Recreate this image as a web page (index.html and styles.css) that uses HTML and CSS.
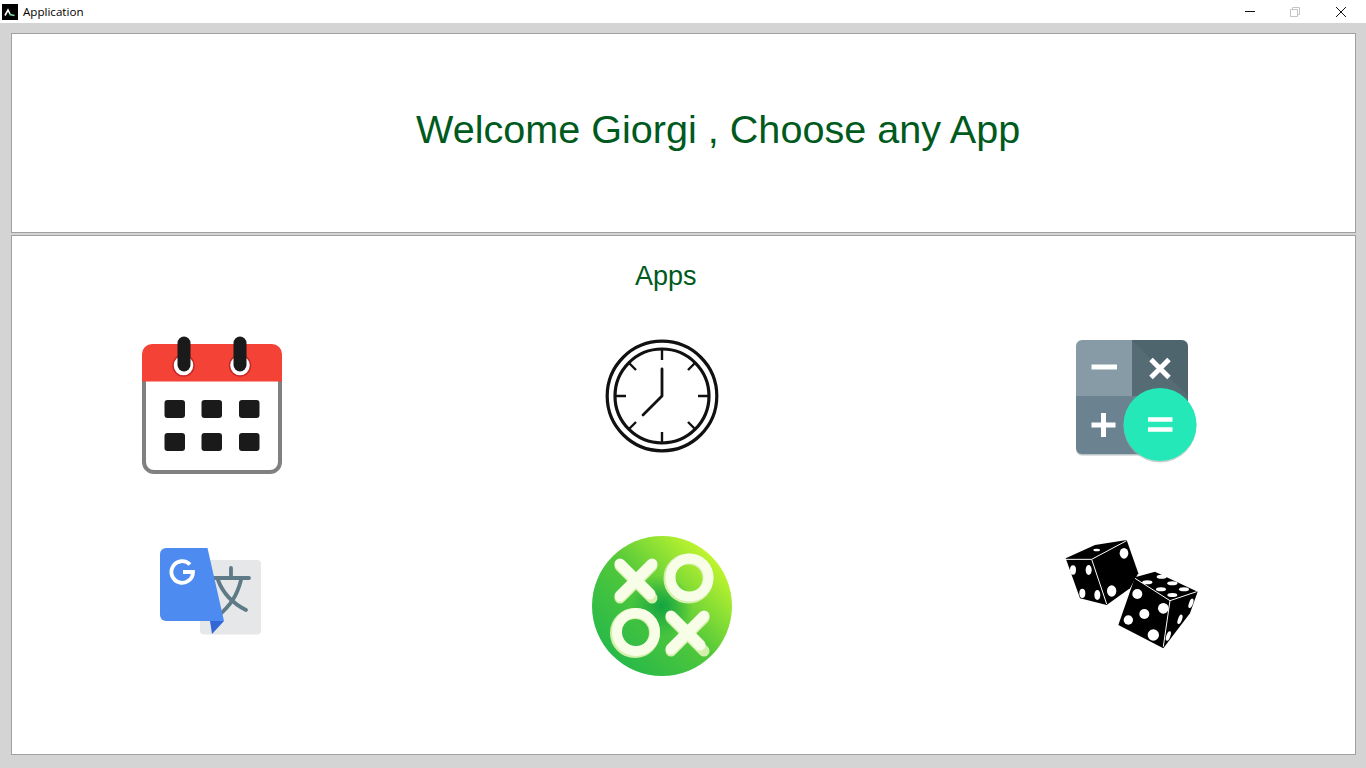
FILE: index.html
```html
<!DOCTYPE html>
<html lang="en">
<head>
<meta charset="utf-8">
<title>Application</title>
<link rel="stylesheet" href="styles.css">
</head>
<body>
<header class="titlebar">
  <div class="title">
    <svg class="app-icon" viewBox="0 0 16 16"><rect width="16" height="16" fill="#000"/><path d="M3 11.500 L6 6 L8 10" fill="none" stroke="#fff" stroke-width="1.600"/><path d="M7.500 10.500 L12.500 11.500" stroke="#7fe0b0" stroke-width="1.600"/></svg>
    <span class="title-text">Application</span>
  </div>
  <div class="win-buttons">
    <div class="win-btn"><svg viewBox="0 0 10 10"><path d="M0 4.500H10" stroke="#111" stroke-width="1"/></svg></div>
    <div class="win-btn"><svg viewBox="0 0 10 10"><path d="M.5 2.500h7v7h-7zM2.500 2.500v-2h7v7h-2" fill="none" stroke="#c4c4c4" stroke-width="1"/></svg></div>
    <div class="win-btn"><svg viewBox="0 0 10 10"><path d="M0 0L10 10M10 0L0 10" stroke="#111" stroke-width="1"/></svg></div>
  </div>
</header>
<main class="content">
  <section class="panel welcome"><h1 class="welcome-text">Welcome Giorgi , Choose any App</h1></section>
  <section class="panel apps">
    <h2 class="apps-title">Apps</h2>
    <div class="app-grid">
      <!-- Calendar -->
      <svg class="icon" viewBox="0 0 140 140">
        <path d="M2 42V126a10 10 0 0 0 10 10H128a10 10 0 0 0 10-10V42" fill="#fff" stroke="#808080" stroke-width="4"/>
        <path d="M0 45.500V18a10 10 0 0 1 10-10H130a10 10 0 0 1 10 10V45.500Z" fill="#f44336"/>
        <circle cx="41.500" cy="29.500" r="10.500" fill="#fff" stroke="#c62828" stroke-width="1.500"/>
        <circle cx="98" cy="29.500" r="10.500" fill="#fff" stroke="#c62828" stroke-width="1.500"/>
        <rect x="35.500" y="0.500" width="13" height="35" rx="6.500" fill="#1a1a1a"/>
        <rect x="91.500" y="0.500" width="13" height="35" rx="6.500" fill="#1a1a1a"/>
        <g fill="#1a1a1a">
          <rect x="22.500" y="64" width="20.500" height="18" rx="3"/><rect x="59.500" y="64" width="20.500" height="18" rx="3"/><rect x="97" y="64" width="20.500" height="18" rx="3"/>
          <rect x="22.500" y="97" width="20.500" height="18" rx="3"/><rect x="59.500" y="97" width="20.500" height="18" rx="3"/><rect x="97" y="97" width="20.500" height="18" rx="3"/>
        </g>
      </svg>
      <!-- Clock -->
      <svg class="icon" viewBox="0 0 140 140">
        <g fill="none" stroke="#111">
          <circle cx="70" cy="60" r="54.800" stroke-width="3.200"/>
          <circle cx="70" cy="60" r="47" stroke-width="3.200"/>
          <path d="M70 13V24M70 96V107M23 60H34M106 60H117M36.500 26.500L44 34M103.500 26.500L96 34M36.500 93.500L44 86M103.500 93.500L96 86" stroke-width="2.400"/>
          <path d="M70 33V60L51 79" stroke-width="2.800" stroke-linecap="round" stroke-linejoin="round"/>
        </g>
      </svg>
      <!-- Calculator -->
      <svg class="icon" viewBox="0 0 140 140">
        <path d="M14 60H78V119.500H20a6 6 0 0 1-6-6Z" fill="#b9c3c8"/>
        <path d="M14 60V10a6 6 0 0 1 6-6H70V60Z" fill="#869ba5"/>
        <path d="M70 4H120a6 6 0 0 1 6 6V66H70Z" fill="#4f656e"/>
        <path d="M70 4L126 60V66H70Z" fill="#566c75"/>
        <path d="M14 60H78V118H20a6 6 0 0 1-6-6Z" fill="#6b8390"/>
        <circle cx="98" cy="90" r="36.500" fill="#9fb5ad" opacity=".6"/>
        <circle cx="98" cy="88.500" r="36.500" fill="#24e8b7"/>
        <g stroke="#fff" stroke-width="5" fill="none">
          <path d="M29.500 31H55"/>
          <path d="M89 23.500L107 41.500M107 23.500L89 41.500"/>
          <path d="M29.500 89H53.500M41.500 77V101"/>
          <path d="M86 83.500H110.500M86 93.500H110.500" stroke-width="4.500"/>
        </g>
      </svg>
      <!-- Translate -->
      <svg class="icon" viewBox="0 0 140 140">
        <rect x="58" y="24" width="61" height="74.500" rx="4" fill="#e6e7e9"/>
        <g fill="none" stroke="#5f7a87" stroke-width="3.800" stroke-linecap="round">
          <path d="M89 32V42M72 42H107"/>
          <path d="M76 44C82 60 92 68 104 74"/>
          <path d="M99 44C95 60 88 70 76 80"/>
        </g>
        <path d="M70 98L68 85H82Z" fill="#3367d6"/>
        <path d="M24 12H65.500L82 85H24a6 6 0 0 1-6-6V18a6 6 0 0 1 6-6Z" fill="#4d8bf0"/>
        <path d="M48 28.500A10.800 10.800 0 1 0 51 36H41" fill="none" stroke="#fff" stroke-width="3.800"/>
      </svg>
      <!-- Tic tac toe -->
      <svg class="icon" viewBox="0 0 140 140">
        <defs>
          <linearGradient id="ttt-a" x1=".12" y1=".88" x2=".88" y2=".12"><stop offset="0" stop-color="#25b84a"/><stop offset=".5" stop-color="#52c83a"/><stop offset="1" stop-color="#c8f82e"/></linearGradient>
          <radialGradient id="ttt-b" cx=".5" cy=".5" r=".22"><stop offset="0" stop-color="#12a441"/><stop offset="1" stop-color="#12a441" stop-opacity="0"/></radialGradient>
        </defs>
        <circle cx="70" cy="70" r="70" fill="url(#ttt-a)"/>
        <circle cx="70" cy="70" r="70" fill="url(#ttt-b)"/>
        <g fill="none" stroke-linecap="round">
          <g stroke="#d5efac">
            <path d="M28 30L60 62M60 30L28 62" stroke-width="11"/>
            <circle cx="96.500" cy="42.500" r="19.500" stroke-width="11"/>
            <circle cx="43" cy="97" r="19.500" stroke-width="11"/>
            <path d="M79 82L112 115M112 82L79 115" stroke-width="11"/>
          </g>
          <g stroke="#f7fde6">
            <path d="M28 28L58 58M60 28L28 60" stroke-width="11"/>
            <circle cx="97.500" cy="41.500" r="19" stroke-width="10"/>
            <circle cx="44" cy="96" r="19" stroke-width="10"/>
            <path d="M79 80L108 109M112 80L79 113" stroke-width="11"/>
          </g>
        </g>
      </svg>
      <!-- Dice -->
      <svg class="icon" viewBox="0 0 140 140">
        <g transform="translate(-7 -6) scale(.3333)">
          <path d="M32 85L120 45L215 30L250 130L225 175L155 225L75 205Z" fill="#000"/>
          <path d="M33 88L110 88L215 32M110 88L155 222" fill="none" stroke="#fff" stroke-width="3"/>
          <g fill="#fff">
            <ellipse cx="54" cy="120" rx="9" ry="14"/><ellipse cx="101" cy="120" rx="9" ry="15"/><ellipse cx="82" cy="190" rx="9" ry="14"/><ellipse cx="127" cy="195" rx="9" ry="15"/>
            <ellipse cx="207" cy="70" rx="13" ry="16"/><ellipse cx="170" cy="183" rx="14" ry="17"/><ellipse cx="125" cy="60" rx="10" ry="4"/>
          </g>
          <path d="M240 142L300 125L428 185L405 250L325 355L190 285Z" fill="#000"/>
          <path d="M240 145L345 212L425 185M345 212L325 350" fill="none" stroke="#fff" stroke-width="3"/>
          <g fill="#fff">
            <ellipse cx="320" cy="140" rx="15" ry="6"/><ellipse cx="352" cy="160" rx="15" ry="6"/><ellipse cx="387" cy="178" rx="15" ry="6"/>
            <ellipse cx="277" cy="157" rx="15" ry="6"/><ellipse cx="318" cy="178" rx="15" ry="6"/><ellipse cx="352" cy="195" rx="15" ry="6"/>
            <circle cx="247" cy="192" r="15"/><circle cx="325" cy="235" r="16"/><circle cx="268" cy="252" r="15"/><circle cx="220" cy="270" r="14"/><circle cx="295" cy="315" r="17"/>
            <ellipse cx="375" cy="268" rx="6" ry="15" transform="rotate(20 375 268)"/><ellipse cx="408" cy="220" rx="6" ry="15" transform="rotate(20 408 220)"/><ellipse cx="340" cy="318" rx="6" ry="15" transform="rotate(20 340 318)"/>
          </g>
        </g>
      </svg>
    </div>
  </section>
</main>
</body>
</html>
```
FILE: styles.css
```css
* { box-sizing: border-box; }
html, body { margin: 0; height: 100%; }
body {
  width: 1366px;
  height: 768px;
  overflow: hidden;
  background: #d4d4d4;
  font-family: "Liberation Sans", Arial, sans-serif;
  display: flex;
  flex-direction: column;
}
.titlebar {
  height: 23px;
  background: #fff;
  display: flex;
  align-items: center;
  justify-content: space-between;
  flex: none;
}
.title { display: flex; align-items: center; padding-left: 2px; }
.app-icon { width: 16px; height: 16px; display: block; }
.title-text {
  margin-left: 5px;
  font-family: "Open Sans", sans-serif;
  font-size: 11.600px;
  color: #000;
}
.win-buttons { display: flex; padding-right: 2.500px; }
.win-btn {
  width: 45.500px;
  height: 23px;
  display: flex;
  align-items: center;
  justify-content: center;
}
.win-btn svg { width: 10px; height: 10px; display: block; }
.content {
  flex: 1;
  padding: 10px 10px 13px 11px;
  display: flex;
  flex-direction: column;
  gap: 2px;
}
.panel { background: #fff; border: 1px solid #a0a0a0; }
.welcome {
  height: 200px;
  flex: none;
  display: flex;
  align-items: center;
  padding: 0 0 8px 404px;
}
.welcome-text {
  margin: 0;
  font-size: 39.600px;
  font-weight: 400;
  color: #005a1e;
}
.apps {
  flex: 1;
  display: flex;
  flex-direction: column;
  align-items: flex-start;
}
.apps-title {
  margin: 24px 0 0 623px;
  font-size: 27px;
  line-height: 32px;
  font-weight: 400;
  color: #005a1e;
}
.app-grid {
  margin: 44px 0 0 130px;
  display: grid;
  grid-template-columns: 450px 470px 140px;
  grid-auto-rows: 140px;
  row-gap: 60px;
}
.icon { width: 140px; height: 140px; display: block; filter: blur(.5px); }
```
